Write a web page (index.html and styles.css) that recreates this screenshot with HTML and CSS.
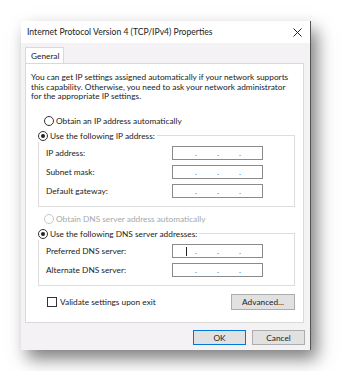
FILE: index.html
```html
<!DOCTYPE html>
<html lang="en">
<head>
    <meta charset="UTF-8">
    <title>Internet Protocol Version 4 (TCP/IPv4) Properties</title>
    <link rel="stylesheet" href="styles.css">
</head>
<body>
    <div class="window">
        <div class="titlebar">
            <span class="title">Internet Protocol Version 4 (TCP/IPv4) Properties</span>
            <svg class="close" width="9" height="9" viewBox="0 0 9 9">
                <path d="M0.5 0.5 L8.5 8.5 M8.5 0.5 L0.5 8.5" stroke="#222" stroke-width="1"/>
            </svg>
        </div>

        <div class="tabs">
            <div class="tab">General</div>
        </div>

        <div class="panel">
            <p class="intro">You can get IP settings assigned automatically if your network supports<br>
                this capability. Otherwise, you need to ask your network administrator<br>
                for the appropriate IP settings.</p>

            <div class="option">
                <span class="radio"></span>Obtain an IP address automatically
            </div>

            <fieldset class="group">
                <legend class="option"><span class="radio checked"></span>Use the following IP address:</legend>
                <div class="row">
                    <label>IP address:</label>
                    <div class="ip-box"><span>.</span><span>.</span><span>.</span></div>
                </div>
                <div class="row">
                    <label>Subnet mask:</label>
                    <div class="ip-box"><span>.</span><span>.</span><span>.</span></div>
                </div>
                <div class="row">
                    <label>Default gateway:</label>
                    <div class="ip-box"><span>.</span><span>.</span><span>.</span></div>
                </div>
            </fieldset>

            <div class="option disabled">
                <span class="radio"></span>Obtain DNS server address automatically
            </div>

            <fieldset class="group">
                <legend class="option"><span class="radio checked"></span>Use the following DNS server addresses:</legend>
                <div class="row">
                    <label>Preferred DNS server:</label>
                    <div class="ip-box focused"><i class="caret"></i><span>.</span><span>.</span><span>.</span></div>
                </div>
                <div class="row">
                    <label>Alternate DNS server:</label>
                    <div class="ip-box"><span>.</span><span>.</span><span>.</span></div>
                </div>
            </fieldset>

            <div class="bottom-row">
                <div class="check"><span class="checkbox"></span>Validate settings upon exit</div>
                <button class="button advanced">Advanced...</button>
            </div>
        </div>

        <div class="footer">
            <button class="button default">OK</button>
            <button class="button">Cancel</button>
        </div>
    </div>
</body>
</html>
```

FILE: styles.css
```css
body {
    margin: 0;
    padding: 21px;
    background-color: white;
    font-family: 'Lato', sans-serif;
    font-size: 8.3px;
    color: #222;
}
.window {
    width: 289px;
    height: 329px;
    background-color: #f4f2f4;
    border-right: 1px solid #555;
    box-shadow: 6px 9px 16px rgba(0, 0, 0, 0.5);
    display: flex;
    flex-direction: column;
}
.titlebar {
    height: 22px;
    background-color: white;
    display: flex;
    align-items: center;
    justify-content: space-between;
    padding: 0 8px 0 6px;
}
.title {
    font-size: 8.6px;
}
.tabs {
    display: flex;
    padding: 4px 0 0 4px;
}
.tab {
    height: 16px;
    line-height: 16px;
    padding-left: 5px;
    background-color: white;
    border: 1px solid #d9d9d9;
    border-bottom: none;
    box-sizing: border-box;
    width: 39px;
}
.panel {
    margin: 0 6px 0 4px;
    height: 260px;
    background-color: white;
    border: 1px solid #d9d9d9;
    box-sizing: border-box;
    padding: 9px 8px 0 5px;
}
.intro {
    margin: 0 0 13px 0;
    line-height: 9.6px;
    white-space: nowrap;
}
.option {
    display: flex;
    align-items: center;
    height: 12px;
    padding-left: 13px;
}
.disabled {
    color: #a8a8a8;
}
.radio {
    width: 8px;
    height: 8px;
    border: 1px solid #333;
    border-radius: 50%;
    margin-right: 2px;
    display: flex;
    align-items: center;
    justify-content: center;
}
.radio.checked::after {
    content: "";
    width: 4px;
    height: 4px;
    border-radius: 50%;
    background-color: #222;
}
.disabled .radio {
    border-color: #c8c8c8;
}
.group {
    margin: 3px 0 6px 7px;
    padding: 2px 0 5px 7px;
    border: 1px solid #dddddd;
    min-width: 0;
}
.group legend.option {
    padding: 0 2px 0 5px;
    margin-left: -13px;
    background-color: white;
}
.row {
    display: flex;
    align-items: center;
    justify-content: space-between;
    padding-right: 31px;
    height: 19px;
}
.ip-box {
    width: 91px;
    height: 14px;
    border: 1px solid #8a8a8a;
    box-sizing: border-box;
    display: flex;
    align-items: center;
    padding-left: 22px;
    gap: 20px;
    color: #4a5a9a;
    position: relative;
}
.ip-box span {
    width: 2px;
    text-align: center;
    line-height: 8px;
}
.caret {
    position: absolute;
    left: 13px;
    top: 2px;
    width: 1px;
    height: 9px;
    background-color: #222;
}
.bottom-row {
    display: flex;
    align-items: center;
    justify-content: space-between;
    margin-top: 8px;
    padding-left: 16px;
}
.check {
    display: flex;
    align-items: center;
}
.checkbox {
    width: 8px;
    height: 8px;
    border: 1px solid #333;
    margin-right: 3px;
}
.button {
    font-family: inherit;
    font-size: 8.3px;
    color: #222;
    background-color: #e1e1e1;
    border: 1px solid #adadad;
    padding: 0;
    height: 15px;
}
.advanced {
    width: 64px;
    height: 16px;
}
.footer {
    display: flex;
    justify-content: flex-end;
    gap: 6px;
    padding: 7px 5px 0 0;
}
.footer .button {
    width: 53px;
}
.default {
    border-color: #0078d7;
}
```
